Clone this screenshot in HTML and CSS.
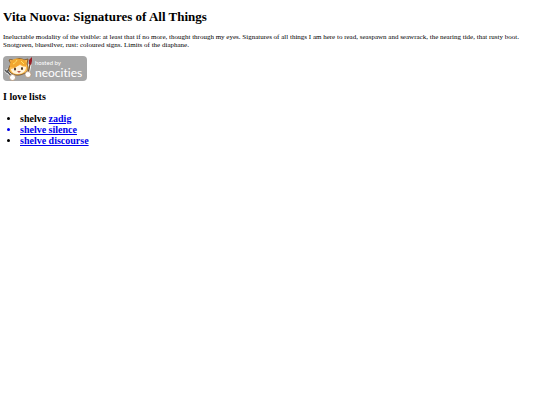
FILE: index.html
```html
<!DOCTYPE html>
<html lang="en">
<head>
<meta charset="utf-8">
<title>Vita Nuova</title>
<link rel="stylesheet" href="styles.css">
</head>
<body>
<h1>Vita Nuova: Signatures of All Things</h1>
<p>Ineluctable modality of the visible: at least that if no more, thought through my eyes. Signatures of all things I am here to read, seaspawn and seawrack, the nearing tide, that rusty boot. Snotgreen, bluesilver, rust: coloured signs. Limits of the diaphane.</p>
<a class="badge" href="#" aria-label="Hosted by Neocities">
  <svg class="cat" viewBox="0 0 32 26" aria-hidden="true">
    <path d="M9 21 4 15M2 14l2 2 2-3" fill="none" stroke="#eee" stroke-width="3"/>
    <path d="M9 21 4 15M2 14l2 2 2-3" fill="none" stroke="#555" stroke-width="1.5"/>
    <path d="M25 18l2-10" fill="none" stroke="#fff" stroke-width="3"/>
    <path d="M25 18l2-10" fill="none" stroke="#765027" stroke-width="1.3"/>
    <path d="m26 8 0-4 3-3v4l-1 4z" fill="#9b1c25"/>
    <path d="M7 16c-2-3-1-5 1-8L6 4c2-1 4 0 5 1 3-3 7-3 10-1l4-1-1 5c2 4 1 7-2 9-5 3-11 3-15-1z" fill="#ffbd50" stroke="#70461b" stroke-width=".8"/>
    <path d="M8 13c3 0 6-3 9-4 2 1 4 2 6 2 0 4-3 7-8 7-4 0-7-2-7-5z" fill="#fff3da"/>
    <path d="M7 11C6 5 11 1 17 3c5 0 7 3 6 7-3 0-4-1-6-2-3 3-6 4-10 3z" fill="#f2a72f"/>
    <path d="M10 8c2-1 3-2 4-4M18 5l3 3" fill="none" stroke="#ffe36b"/>
    <ellipse cx="12" cy="13" rx="1" ry="1.5" fill="#493021"/>
    <ellipse cx="19" cy="12.5" rx="1" ry="1.5" fill="#493021"/>
    <path d="M14 15h4l-2 2z" fill="#bd5044"/>
    <circle cx="9.5" cy="21.5" r="3" fill="#fff" stroke="#b18d68" stroke-width=".7"/>
    <circle cx="25" cy="18.5" r="3" fill="#fff" stroke="#b18d68" stroke-width=".7"/>
  </svg>
  <span class="wordmark"><small>hosted by</small><span>neocities</span></span>
</a>
<h3>I love lists</h3>
<ul>
  <li>shelve <a href="#">zadig</a></li>
  <li class="linked"><a href="#">shelve silence</a></li>
  <li><a href="#">shelve discourse</a></li>
</ul>
</body>
</html>
```
FILE: styles.css
```css
body {
  margin: 9px 3px;
  background: #fff;
  color: #000;
  font-family: "Liberation Serif", serif;
  font-size: 7px;
  line-height: 8px;
}
h1 {
  margin: 0 0 8px;
  font-size: 13px;
  line-height: 16px;
}
p {
  margin: 0 0 7px;
}
a {
  color: #0000ee;
}
.badge {
  display: flex;
  width: fit-content;
  height: 25px;
  padding-right: 5px;
  border-radius: 4px;
  background: #a7a7a7;
  color: #fff;
  font-family: Lato, sans-serif;
  font-variant-ligatures: none;
  text-decoration: none;
}
.cat {
  width: 32px;
  height: 26px;
}
.wordmark {
  display: flex;
  flex-direction: column;
  padding-top: 3px;
  font-size: 12px;
  line-height: 13px;
}
.wordmark small {
  font-size: 6px;
  line-height: 7px;
}
h3 {
  margin: 10px 0;
  font-size: 10px;
  line-height: 12px;
}
ul {
  margin: 0;
  padding-left: 17px;
  font-size: 10px;
  font-weight: bold;
  line-height: 11px;
}
.linked {
  color: #0000ee;
}
```
